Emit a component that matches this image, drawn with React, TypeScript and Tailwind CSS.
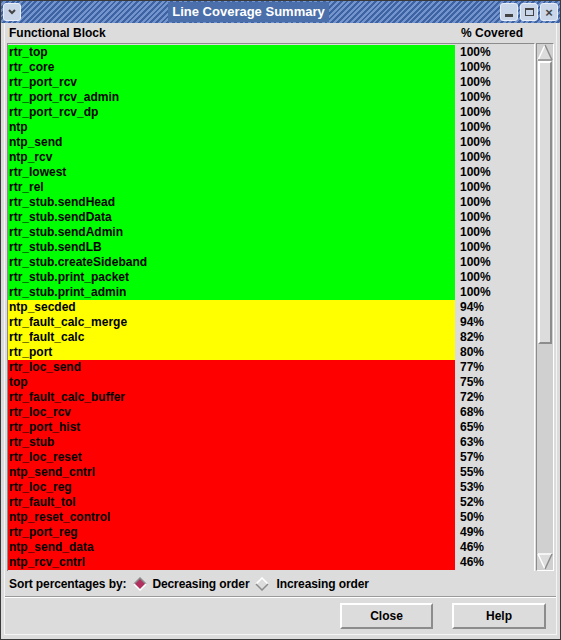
import React from "react";

type Row = { name: string; pct: number };

const ROWS: Row[] = [
  { name: "rtr_top", pct: 100 },
  { name: "rtr_core", pct: 100 },
  { name: "rtr_port_rcv", pct: 100 },
  { name: "rtr_port_rcv_admin", pct: 100 },
  { name: "rtr_port_rcv_dp", pct: 100 },
  { name: "ntp", pct: 100 },
  { name: "ntp_send", pct: 100 },
  { name: "ntp_rcv", pct: 100 },
  { name: "rtr_lowest", pct: 100 },
  { name: "rtr_rel", pct: 100 },
  { name: "rtr_stub.sendHead", pct: 100 },
  { name: "rtr_stub.sendData", pct: 100 },
  { name: "rtr_stub.sendAdmin", pct: 100 },
  { name: "rtr_stub.sendLB", pct: 100 },
  { name: "rtr_stub.createSideband", pct: 100 },
  { name: "rtr_stub.print_packet", pct: 100 },
  { name: "rtr_stub.print_admin", pct: 100 },
  { name: "ntp_secded", pct: 94 },
  { name: "rtr_fault_calc_merge", pct: 94 },
  { name: "rtr_fault_calc", pct: 82 },
  { name: "rtr_port", pct: 80 },
  { name: "rtr_loc_send", pct: 77 },
  { name: "top", pct: 75 },
  { name: "rtr_fault_calc_buffer", pct: 72 },
  { name: "rtr_loc_rcv", pct: 68 },
  { name: "rtr_port_hist", pct: 65 },
  { name: "rtr_stub", pct: 63 },
  { name: "rtr_loc_reset", pct: 57 },
  { name: "ntp_send_cntrl", pct: 55 },
  { name: "rtr_loc_reg", pct: 53 },
  { name: "rtr_fault_tol", pct: 52 },
  { name: "ntp_reset_control", pct: 50 },
  { name: "rtr_port_reg", pct: 49 },
  { name: "ntp_send_data", pct: 46 },
  { name: "ntp_rcv_cntrl", pct: 46 },
];

function rowColor(pct: number) {
  if (pct >= 100) return "bg-[#00ff00]";
  if (pct >= 80) return "bg-[#ffff00]";
  return "bg-[#ff0000]";
}

function TitleButton({ children }: { children: React.ReactNode }) {
  return (
    <div className="w-[18px] h-[18px] rounded-[3px] border border-[#e8eef8] bg-[#c9d6ea] flex items-center justify-center">
      {children}
    </div>
  );
}

function Diamond({ on }: { on: boolean }) {
  return (
    <svg width="14" height="14" viewBox="0 0 14 14">
      <polygon points="7,1 13,7 7,13 1,7" fill={on ? "#b03060" : "#dcdcdc"} />
      <polyline points="1,7 7,1 13,7" fill="none" stroke={on ? "#8c8c8c" : "#ffffff"} strokeWidth="1.5" />
      <polyline points="1,7 7,13 13,7" fill="none" stroke={on ? "#ffffff" : "#8c8c8c"} strokeWidth="1.5" />
    </svg>
  );
}

export default function App() {
  return (
    <div
      className="w-[561px] h-[640px] bg-[#dcdcdc] text-black flex flex-col overflow-hidden border border-[#3a3a3a]"
      style={{ fontFamily: '"Liberation Sans", Arial, sans-serif' }}
    >
      {/* Title bar */}
      <div className="h-[22px] shrink-0 flex items-center px-[2px] gap-[3px] bg-[repeating-linear-gradient(135deg,#3e63a3_0px,#3e63a3_2px,#7394cc_2px,#7394cc_4px)]">
        <TitleButton>
          <svg width="10" height="10" viewBox="0 0 10 10">
            <polyline points="2,3 5,6 8,3" fill="none" stroke="#444" strokeWidth="2" />
          </svg>
        </TitleButton>
        <div className="flex-1 flex justify-center pr-[24px]">
          <span className="px-[4px] bg-[#4a6faa] text-white font-bold text-[13px] leading-[20px]">
            Line Coverage Summary
          </span>
        </div>
        <div className="flex gap-[2px]">
          <TitleButton>
            <div className="w-[8px] h-[3px] bg-[#444] mt-[6px]" />
          </TitleButton>
          <TitleButton>
            <div className="w-[9px] h-[8px] border border-[#444] border-t-[2px]" />
          </TitleButton>
          <TitleButton>
            <span className="text-[#444] text-[13px] font-bold leading-none">×</span>
          </TitleButton>
        </div>
      </div>

      {/* Body */}
      <div className="flex-1 flex flex-col mx-[3px] mb-[4px] border-x border-b border-[#f4f4f4]">
        {/* Header */}
        <div className="h-[20px] shrink-0 flex items-center text-[12px] font-bold">
          <span className="pl-[4px] w-[455px]">Functional Block</span>
          <span className="pl-[1px]">% Covered</span>
        </div>

        {/* List */}
        <div className="h-[528px] shrink-0 flex ml-[2px] mr-[1px]">
          <div className="w-[528px] overflow-hidden pt-[1px] border-t border-l border-[#8c8c8c] border-r border-r-[#ffffff]">
            {ROWS.map((r) => (
              <div key={r.name} className="flex h-[15px] text-[12px] font-bold leading-[15px]">
                <div className={`w-[447px] pl-[1px] ${rowColor(r.pct)}`}>{r.name}</div>
                <div className="pl-[5px]">{r.pct}%</div>
              </div>
            ))}
          </div>
          {/* Scrollbar */}
          <div className="w-[18px] ml-[1px] flex flex-col border border-[#8c8c8c] border-r-[#ffffff] border-b-[#ffffff] bg-[#d0d0d0]">
            <svg width="16" height="17" viewBox="0 0 16 17" className="shrink-0">
              <polygon points="8,1 15,16 1,16" fill="#dcdcdc" />
              <line x1="1" y1="16" x2="8" y2="1" stroke="#ffffff" strokeWidth="1.5" />
              <line x1="8" y1="1" x2="15" y2="16" stroke="#8c8c8c" strokeWidth="1.5" />
              <line x1="1" y1="16" x2="15" y2="16" stroke="#8c8c8c" strokeWidth="1.5" />
            </svg>
            <div className="h-[283px] shrink-0 mx-[1px] bg-[#dcdcdc] border-[2px] border-t-[#ffffff] border-l-[#ffffff] border-r-[#8c8c8c] border-b-[#8c8c8c]" />
            <div className="flex-1" />
            <svg width="16" height="17" viewBox="0 0 16 17" className="shrink-0">
              <polygon points="1,1 15,1 8,16" fill="#dcdcdc" />
              <line x1="1" y1="1" x2="15" y2="1" stroke="#ffffff" strokeWidth="1.5" />
              <line x1="1" y1="1" x2="8" y2="16" stroke="#ffffff" strokeWidth="1.5" />
              <line x1="15" y1="1" x2="8" y2="16" stroke="#8c8c8c" strokeWidth="1.5" />
            </svg>
          </div>
        </div>

        {/* Sort options */}
        <div className="h-[26px] shrink-0 flex items-center pl-[4px] text-[12px] font-bold tracking-[-0.1px] border-b border-[#9a9a9a]">
          <span>Sort percentages by:</span>
          <span className="ml-[7px] mr-[5px]"><Diamond on /></span>
          <span>Decreasing order</span>
          <span className="ml-[6px] mr-[7px]"><Diamond on={false} /></span>
          <span>Increasing order</span>
        </div>

        {/* Buttons */}
        <div className="flex-1 border-t border-[#ffffff] flex items-start justify-end gap-[19px] pt-[5px] pr-[10px]">
          <button className="w-[93px] h-[26px] text-[12px] font-bold bg-[#dcdcdc] border-[2px] border-t-[#ffffff] border-l-[#ffffff] border-r-[#8c8c8c] border-b-[#8c8c8c]">
            Close
          </button>
          <button className="w-[94px] h-[26px] text-[12px] font-bold bg-[#dcdcdc] border-[2px] border-t-[#ffffff] border-l-[#ffffff] border-r-[#8c8c8c] border-b-[#8c8c8c]">
            Help
          </button>
        </div>
      </div>
    </div>
  );
}
